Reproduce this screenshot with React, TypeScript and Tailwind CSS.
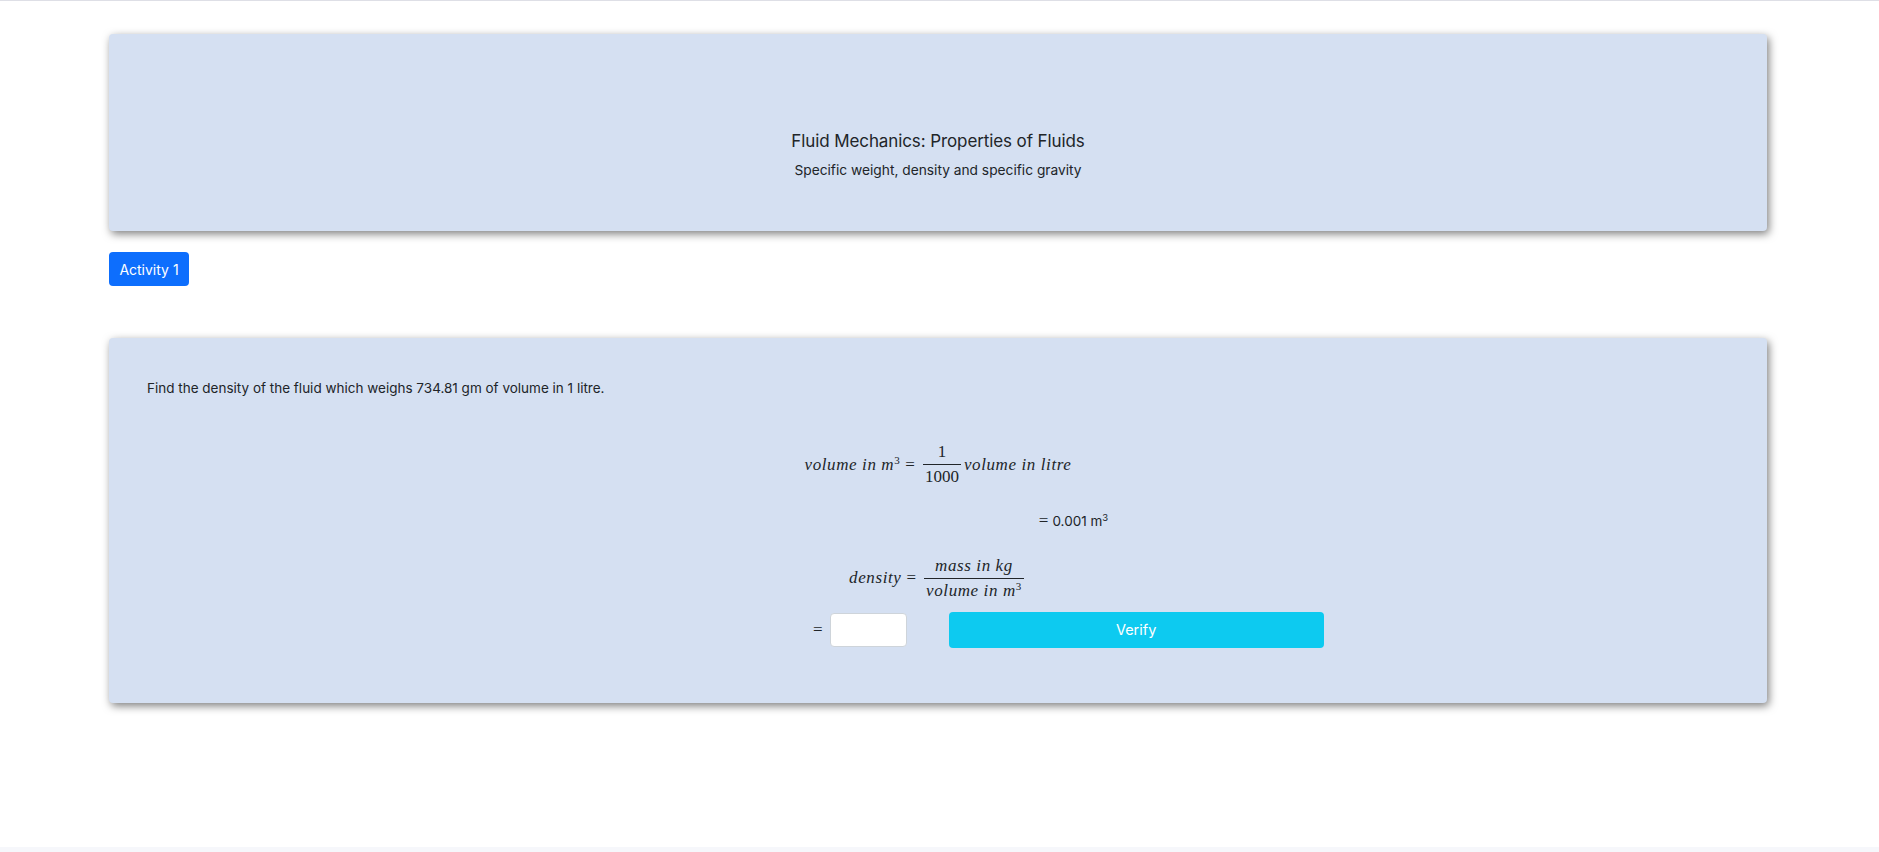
import { useState } from "react";

function Frac({ top, bottom }: { top: React.ReactNode; bottom: React.ReactNode }) {
  return (
    <span className="mx-[3px] inline-flex flex-col items-center align-middle">
      <span className="px-[2px] pb-[3px] leading-[18px]">{top}</span>
      <span className="h-px w-full bg-[#212529]" />
      <span className="px-[2px] pt-[3px] leading-[18px]">{bottom}</span>
    </span>
  );
}

const mathFont = "font-['Liberation_Serif',serif]";

export default function App() {
  const [answer, setAnswer] = useState("");

  return (
    <main className="flex h-[852px] flex-col bg-white font-['Inter',sans-serif] text-[#212529]">
      <div className="h-px bg-[#dedfe6]" />

      <div className="ml-[109px] w-[1658px] pt-[33px]">
        <header className="flex h-[197px] flex-col items-center rounded-[4px] bg-[#d5e0f2] pt-[96px] shadow-[2px_3px_8px_rgba(0,0,0,0.5)]">
          <h1 className="text-[17px] leading-[22px] font-normal tracking-[-0.1px]">
            Fluid Mechanics: Properties of Fluids
          </h1>
          <p className="mt-[8px] text-[13.75px] leading-[20px]">
            Specific weight, density and specific gravity
          </p>
        </header>

        <div className="mt-[21px]">
          <button
            type="button"
            className="h-[34px] w-[80px] rounded-[4px] bg-[#0d6efd] text-[14px] text-white"
          >
            Activity 1
          </button>
        </div>

        <section className="mt-[52px] h-[365px] rounded-[4px] bg-[#d5e0f2] px-[38px] pt-[40px] shadow-[2px_3px_8px_rgba(0,0,0,0.5)]">
          <p className="text-[13.5px] leading-[20px]">
            Find the density of the fluid which weighs 734.81 gm of volume in 1 litre.
          </p>

          <div className={`mt-[45px] flex justify-center text-[17px] ${mathFont}`}>
            <div className="flex items-center">
              <span className="italic tracking-[0.6px]">
                volume in m<sup className="text-[11px] not-italic">3</sup>
              </span>
              <span className="mx-[5px]">=</span>
              <Frac top="1" bottom="1000" />
              <span className="italic tracking-[0.6px]">volume in litre</span>
            </div>
          </div>

          <div className="mt-[22px] flex justify-center">
            <div className="ml-[271px] flex items-center text-[13.5px]">
              <span className={`mr-[4px] text-[17px] ${mathFont}`}>=</span>
              <span>
                0.001 m<sup className="text-[9.5px]">3</sup>
              </span>
            </div>
          </div>

          <div className={`mt-[23px] flex justify-center text-[17px] ${mathFont}`}>
            <div className="flex items-center">
              <span className="italic tracking-[0.6px]">density</span>
              <span className="mx-[5px]">=</span>
              <Frac
                top={<span className="italic tracking-[0.6px]">mass in kg</span>}
                bottom={
                  <span className="italic tracking-[0.6px]">
                    volume in m<sup className="text-[11px] not-italic">3</sup>
                  </span>
                }
              />
            </div>
          </div>

          <div className="mt-[12px] flex items-center pl-[666px]">
            <span className={`mr-[7px] text-[17px] ${mathFont}`}>=</span>
            <input
              value={answer}
              onChange={(e) => setAnswer(e.target.value)}
              className="h-[34px] w-[77px] rounded-[4px] border border-[#ced4da] bg-white px-2 text-[13px] outline-none"
            />
            <button
              type="button"
              className="ml-[42px] h-[36px] w-[375px] rounded-[4px] bg-[#0dcaf0] text-[14.5px] text-white"
            >
              Verify
            </button>
          </div>
        </section>
      </div>

      <div className="mt-auto h-[5px] bg-[#f6f7fb]" />
    </main>
  );
}
